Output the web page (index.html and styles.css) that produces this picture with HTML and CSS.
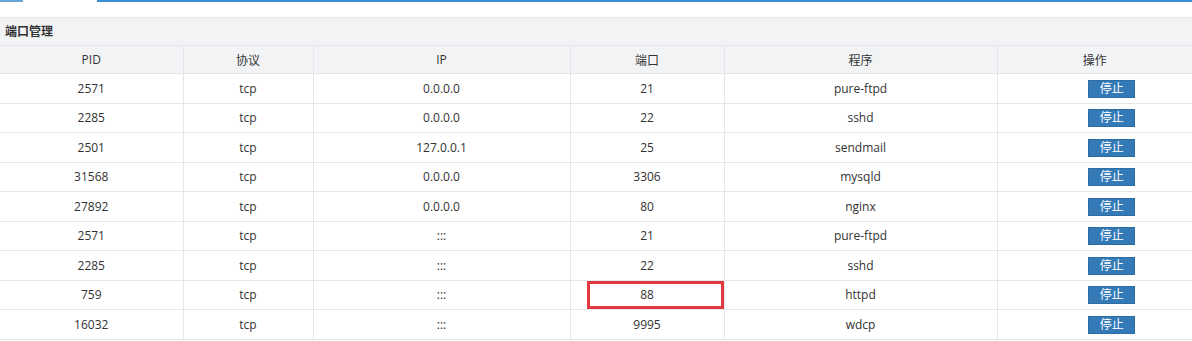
FILE: index.html
```html
<!DOCTYPE html>
<html>
<head>
<meta charset="utf-8">
<link rel="stylesheet" href="styles.css">
</head>
<body>
<div class="tabs">
  <div class="tab-left"></div>
  <div class="tab-active"></div>
  <div class="tab-rest"></div>
</div>
<div class="spacer"></div>
<div class="panel">
  <div class="panel-title">端口管理</div>
  <table class="ports">
    <colgroup>
      <col class="c1"><col class="c2"><col class="c3"><col class="c4"><col class="c5"><col class="c6">
    </colgroup>
    <thead>
      <tr><th>PID</th><th>协议</th><th>IP</th><th>端口</th><th>程序</th><th>操作</th></tr>
    </thead>
    <tbody>
      <tr><td>2571</td><td>tcp</td><td>0.0.0.0</td><td>21</td><td>pure-ftpd</td><td class="act"><button class="btn">停止</button></td></tr>
      <tr><td>2285</td><td>tcp</td><td>0.0.0.0</td><td>22</td><td>sshd</td><td class="act"><button class="btn">停止</button></td></tr>
      <tr><td>2501</td><td>tcp</td><td>127.0.0.1</td><td>25</td><td>sendmail</td><td class="act"><button class="btn">停止</button></td></tr>
      <tr><td>31568</td><td>tcp</td><td>0.0.0.0</td><td>3306</td><td>mysqld</td><td class="act"><button class="btn">停止</button></td></tr>
      <tr><td>27892</td><td>tcp</td><td>0.0.0.0</td><td>80</td><td>nginx</td><td class="act"><button class="btn">停止</button></td></tr>
      <tr><td>2571</td><td>tcp</td><td>:::</td><td>21</td><td>pure-ftpd</td><td class="act"><button class="btn">停止</button></td></tr>
      <tr><td>2285</td><td>tcp</td><td>:::</td><td>22</td><td>sshd</td><td class="act"><button class="btn">停止</button></td></tr>
      <tr><td>759</td><td>tcp</td><td>:::</td><td class="hl-cell"><span class="hl-box"></span>88</td><td>httpd</td><td class="act"><button class="btn">停止</button></td></tr>
      <tr><td>16032</td><td>tcp</td><td>:::</td><td>9995</td><td>wdcp</td><td class="act"><button class="btn">停止</button></td></tr>
    </tbody>
  </table>
</div>
</body>
</html>
```
FILE: styles.css
```css
html, body {
  margin: 0;
  padding: 0;
  background: #fff;
}
body {
  font-family: "Open Sans", "Noto Sans CJK SC", sans-serif;
  font-size: 12px;
  color: #333;
  width: 1192px;
  height: 341px;
  overflow: hidden;
}
.tabs {
  display: flex;
  height: 2px;
}
.tab-left {
  width: 23px;
  background: #6aa5d8;
}
.tab-active {
  width: 74px;
  background: #fff;
}
.tab-rest {
  flex: 1;
  background: #3c8dcf;
}
.spacer {
  height: 15px;
  border-bottom: 1px solid #e4e6e9;
}
.panel {
  background: #fff;
}
.panel-title {
  height: 27px;
  line-height: 27px;
  padding-left: 5px;
  background: #f2f3f5;
  font-weight: bold;
  color: #333;
  font-size: 12px;
  border-bottom: 1px solid #e4e6e9;
}
.ports {
  width: 1192px;
  border-collapse: collapse;
  table-layout: fixed;
}
.ports col.c1 { width: 183px; }
.ports col.c2 { width: 130px; }
.ports col.c3 { width: 257px; }
.ports col.c4 { width: 154px; }
.ports col.c5 { width: 273px; }
.ports col.c6 { width: 195px; }
.ports th {
  background: #f2f3f5;
  font-weight: normal;
  height: 27px;
  padding: 0;
  border: 1px solid #e4e6e9;
  border-top: none;
  color: #333;
}
.ports td {
  height: 28.5px;
  padding: 0;
  text-align: center;
  border: 1px solid #e4e6e9;
  color: #333;
}
.ports tr > :first-child { border-left: none; }
.ports tr > :last-child { border-right: none; }
.ports td.act {
  padding-left: 34px;
}
.hl-cell {
  position: relative;
}
.hl-box {
  position: absolute;
  left: 16px;
  right: 0;
  top: 0;
  bottom: 0;
  border: 3px solid #e2393f;
}
.btn {
  display: inline-block;
  width: 47px;
  height: 18px;
  padding: 0;
  margin: 0;
  border: 1px solid #2e6da4;
  background: #337ab7;
  color: #fff;
  font-family: "Open Sans", "Noto Sans CJK SC", sans-serif;
  font-size: 12px;
  line-height: 16px;
  vertical-align: middle;
  cursor: pointer;
}
```
